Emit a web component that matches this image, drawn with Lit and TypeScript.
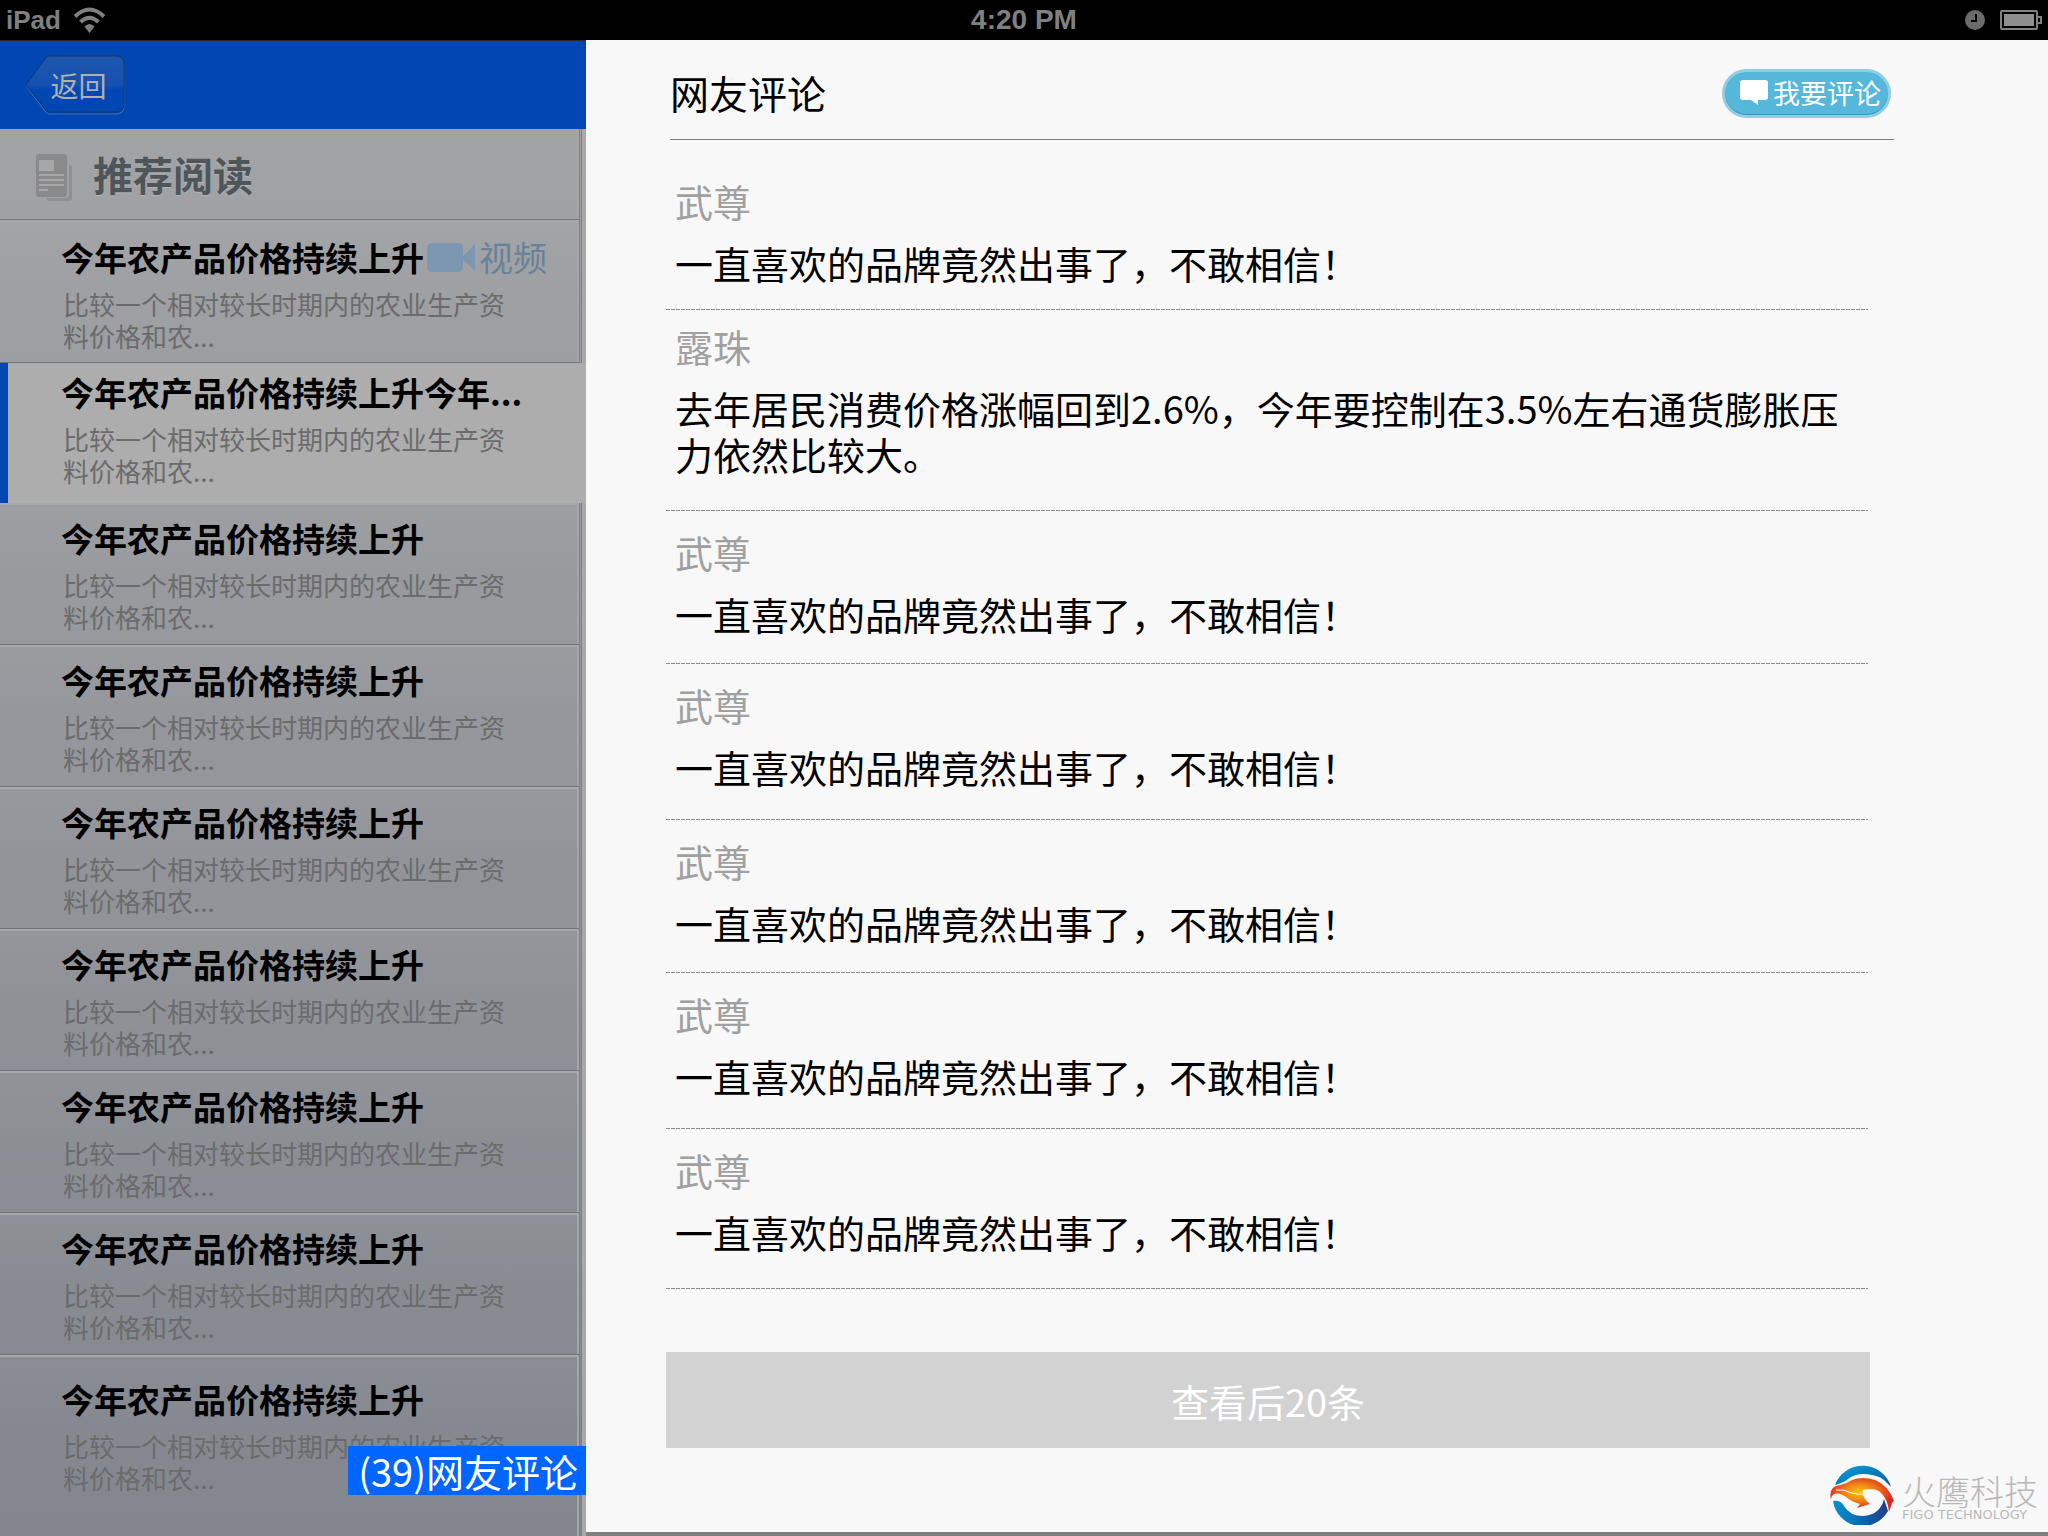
import { LitElement, html, css } from "lit";
import { customElement } from "lit/decorators.js";
import { classMap } from "lit/directives/class-map.js";

interface Article {
  title: string;
  video?: boolean;
  active?: boolean;
}

interface Comment {
  name: string;
  text: string;
  space?: "short" | "tight" | "loose" | "long";
}

const TITLE = "今年农产品价格持续上升";
const SUMMARY = ["比较一个相对较长时期内的农业生产资", "料价格和农..."];
const PRAISE = "一直喜欢的品牌竟然出事了，不敢相信！";

const articles: Article[] = [
  { title: TITLE, video: true },
  { title: TITLE + "今年...", active: true },
  ...Array.from({ length: 7 }, () => ({ title: TITLE })),
];

const comments: Comment[] = [
  { name: "武尊", text: PRAISE, space: "short" },
  { name: "露珠", text: "去年居民消费价格涨幅回到2.6%，今年要控制在3.5%左右通货膨胀压力依然比较大。", space: "long" },
  { name: "武尊", text: PRAISE, space: "tight" },
  { name: "武尊", text: PRAISE },
  { name: "武尊", text: PRAISE, space: "tight" },
  { name: "武尊", text: PRAISE },
  { name: "武尊", text: PRAISE, space: "loose" },
];

@customElement("status-bar")
class StatusBar extends LitElement {
  static styles = css`
    :host {
      display: grid;
      grid-template-columns: 1fr auto 1fr;
      align-items: center;
      height: 40px;
      padding: 0 6px;
      background: #000;
      color: #808080;
      font: bold 28px/40px "Liberation Sans", Arial, sans-serif;
    }
    .left, .right { display: flex; align-items: center; }
    .left { gap: 12px; font-size: 26px; }
    .right { justify-content: flex-end; gap: 15px; }
    svg { display: block; }
  `;
  render() {
    return html`
      <div class="left">
        <span>iPad</span>
        <svg width="33" height="28" viewBox="0 0 33 28" fill="none" stroke="#808080" stroke-width="4">
          <path d="M2 10.5Q16.500-3.500 31 10.500"/>
          <path d="M7.500 16Q16.500 7.500 25.500 16"/>
          <path d="M11.500 20.500Q16.500 15.500 21.500 20.500L16.500 27Z" fill="#808080" stroke="none"/>
        </svg>
      </div>
      <span>4:20 PM</span>
      <div class="right">
        <svg width="20" height="20" viewBox="0 0 20 20">
          <circle cx="10" cy="10" r="10" fill="#6b6b6b"/>
          <path d="M11 4V11H6" fill="none" stroke="#000" stroke-width="2"/>
        </svg>
        <svg width="42" height="20" viewBox="0 0 42 20">
          <rect x="1" y="1" width="36" height="18" rx="1" fill="none" stroke="#808080" stroke-width="2"/>
          <rect x="4" y="4" width="30" height="12" fill="#8e8e8e"/>
          <path d="M38 7h3v6h-3" fill="none" stroke="#808080" stroke-width="2"/>
        </svg>
      </div>
    `;
  }
}

@customElement("article-list")
class ArticleList extends LitElement {
  static styles = css`
    :host {
      display: flex;
      flex-direction: column;
      position: relative;
      background: #a9a9aa;
      font-family: "Noto Sans CJK SC", sans-serif;
    }
    .top {
      display: flex;
      align-items: center;
      height: 88px;
      padding: 0 24px;
      border-top: 1px solid #2a2a2a;
      background: #0047b3;
    }
    .back {
      position: relative;
      width: 101px;
      height: 60px;
      padding: 0 0 0 8px;
      border: 0;
      background: none;
      color: #b0b0b0;
      font: inherit;
      font-size: 28px;
      line-height: 58px;
    }
    .back svg { position: absolute; inset: 0; }
    .back span { position: relative; }
    .pane {
      flex: 1;
      margin-right: 4px;
      border-right: 3px double #7e7f82;
      background: linear-gradient(#a2a3a5, #9b9ca0 25%, #83868e);
      box-shadow: inset -2px 0 #a4a5a7;
    }
    h2 {
      box-sizing: border-box;
      display: flex;
      align-items: center;
      gap: 21px;
      height: 91px;
      margin: 0;
      padding: 0 0 0 36px;
      border-bottom: 1px solid #77787b;
      color: #4e565a;
      font-size: 40px;
      line-height: 60px;
      text-shadow: 0 1px 1px #b5b6b8;
    }
    h2 svg { margin-top: 8px; }
    ul { margin: 0; padding: 0; list-style: none; }
    li {
      box-sizing: border-box;
      height: 142px;
      padding: 10px 0 0 61px;
      border-top: 2px solid #a7a8aa;
      border-bottom: 1px solid #727478;
      background: linear-gradient(#ffffff08, #0000 50%);
    }
    li:first-child { height: 143px; padding-top: 12px; }
    li.active {
      height: 140px;
      margin-right: -7px;
      padding: 6px 0 0 53px;
      border: 0;
      border-left: 8px solid #0047b3;
      background: #adadad;
    }
    li:last-child { padding-top: 19px; border-bottom: 0; }
    a {
      display: flex;
      align-items: center;
      color: #000;
      font-size: 33px;
      font-weight: 700;
      line-height: 46px;
      text-decoration: none;
      white-space: nowrap;
    }
    .video {
      display: flex;
      align-items: center;
      gap: 4px;
      margin-left: 3px;
      color: #6a8299;
      font-size: 34px;
      font-weight: 400;
    }
    p {
      margin: 8px 0 0 2px;
      color: #6b6b6c;
      font-size: 26px;
      line-height: 32px;
      white-space: pre-line;
    }
    .count {
      position: absolute;
      right: 0;
      bottom: 41px;
      height: 49px;
      padding: 0 8px 0 10px;
      border: 0;
      background: #0066ff;
      color: #fff;
      font: inherit;
      font-size: 38px;
      line-height: 48px;
    }
  `;
  render() {
    return html`
      <header class="top">
        <button class="back">
          <svg width="101" height="60" viewBox="0 0 101 60">
            <defs>
              <linearGradient id="face" x1="0" y1="0" x2="0" y2="1">
                <stop offset="0" stop-color="#1d56ae"/>
                <stop offset="0.52" stop-color="#1651b0"/>
                <stop offset="0.6" stop-color="#0047b3"/>
              </linearGradient>
            </defs>
            <path d="M25 2H92Q100 2 100 10V51Q100 59 92 59H25Q23 59 21 56L2 31L21 5Q23 2 25 2Z" fill="none" stroke="#3d70bd"/>
            <path d="M25 1H92Q100 1 100 9V49Q100 57 92 57H25Q23 57 21 54L2 30L21 4Q23 1 25 1Z" fill="url(#face)" stroke="#1c3460"/>
          </svg>
          <span>返回</span>
        </button>
      </header>
      <div class="pane">
        <h2>
          <svg width="36" height="48" viewBox="0 0 36 48">
            <path d="M33 11Q36 11 36 14V44Q36 47 33 47H14Q11 47 10 44H29Q33 44 33 40Z" fill="#8f9091"/>
            <rect width="31" height="43" rx="3" fill="#8a8a8a"/>
            <path d="M3 6H18V17H3ZM3 20H28V22H3ZM3 25H28V27H3ZM3 30H28V32H3ZM3 35H12V37H3Z" fill="#a6a7a8"/>
          </svg>
          推荐阅读
        </h2>
        <ul>
          ${articles.map((a) => html`
            <li class=${classMap({ active: !!a.active })}>
              <a href="#">${a.title}${a.video ? html`
                <span class="video">
                  <svg width="48" height="29" viewBox="0 0 48 29" fill="#7d97b3">
                    <rect width="36" height="29" rx="5"/>
                    <path d="M35 14L48 1V28L35 16Z"/>
                  </svg>视频</span>` : ""}</a>
              <p>${SUMMARY.join("\n")}</p>
            </li>`)}
        </ul>
      </div>
      <button class="count">(39)网友评论</button>
    `;
  }
}

@customElement("comment-panel")
class CommentPanel extends LitElement {
  static styles = css`
    :host {
      display: flex;
      flex-direction: column;
      padding: 0 154px 0 80px;
      border-bottom: 4px solid #808080;
      background: #f8f8f8;
      font-family: "Noto Sans CJK SC", sans-serif;
    }
    header {
      display: flex;
      justify-content: space-between;
      align-items: center;
      height: 99px;
      margin-left: 4px;
      border-bottom: 1px solid #7c7c7c;
    }
    h1 { margin: 4px 0 0; font-size: 39px; font-weight: 400; line-height: 60px; color: #000; }
    .write {
      display: flex;
      align-items: center;
      gap: 5px;
      box-sizing: border-box;
      height: 49px;
      margin: 7px 3px 0 0;
      padding: 0 7px 0 15px;
      border: 3px solid #92cde1;
      border-radius: 25px;
      background: #55b7da;
      box-shadow: inset 0 -1px 0 #3f97b6;
      color: #fff;
      font: inherit;
      font-size: 27px;
      line-height: 40px;
    }
    ul { margin: 0 26px 0 0; padding: 20px 0 0; list-style: none; }
    li {
      padding: 13px 0 30px 9px;
      background: repeating-linear-gradient(90deg, #8c8c8c 0 4px, #f8f8f8 4px 5px) bottom / 100% 1px no-repeat;
    }
    li.short { padding-bottom: 24px; }
    li.tight { padding-bottom: 27px; }
    li.loose { padding-bottom: 34px; }
    li.long { padding-top: 8px; padding-bottom: 34px; }
    h3 { margin: 0; color: #a0a0a0; font-size: 38px; font-weight: 400; line-height: 56px; }
    p { margin: 11px 0 0; max-width: 1170px; color: #000; font-size: 38px; line-height: 46px; }
    .more {
      height: 96px;
      margin: 63px 24px 0 0;
      border: 0;
      background: #d2d2d2;
      color: #fff;
      font: inherit;
      font-size: 38px;
    }
    footer { display: flex; justify-content: flex-end; align-items: center; gap: 6px; margin: 17px -144px 0 0; color: #b8b8b8; }
    .brand { display: flex; flex-direction: column; padding-top: 6px; }
    .brand b { font-size: 34px; font-weight: 300; line-height: 34px; }
    .brand small { font: 13px/14px "DejaVu Sans", sans-serif; }
  `;
  render() {
    return html`
      <header>
        <h1>网友评论</h1>
        <button class="write">
          <svg width="28" height="26" viewBox="0 0 28 26" fill="#fff">
            <path d="M3 0H25Q28 0 28 3V17Q28 20 25 20H18V25L11 20H3Q0 20 0 17V3Q0 0 3 0Z"/>
          </svg>
          我要评论
        </button>
      </header>
      <ul>
        ${comments.map((c) => html`
          <li class=${c.space ?? ""}>
            <h3>${c.name}</h3>
            <p>${c.text}</p>
          </li>`)}
      </ul>
      <button class="more">查看后20条</button>
      <footer>
        <svg width="66" height="60" viewBox="0 0 66 60">
          <defs>
            <linearGradient id="sky" x1="0" y1="0" x2="1" y2="1">
              <stop offset="0" stop-color="#00a3df"/><stop offset="1" stop-color="#0a559c"/>
            </linearGradient>
            <linearGradient id="sea" x1="0" y1="0" x2="1" y2="0">
              <stop offset="0" stop-color="#0092d2"/><stop offset="1" stop-color="#1f3f8a"/>
            </linearGradient>
            <radialGradient id="fire" cx="0.46" cy="0.42" r="0.52">
              <stop offset="0" stop-color="#fbc800"/><stop offset="0.45" stop-color="#f08519"/><stop offset="1" stop-color="#dd261c"/>
            </radialGradient>
          </defs>
          <path d="M5 20A29.500 29.500 0 0 1 61 22L57 18Q51 11 42 10Q27 7 18 14Q13 18 5 20Z" fill="url(#sky)"/>
          <path d="M3 36Q11 35 14 41Q20 51 33 51Q50 50 54 34L58 46A29.500 29.500 0 0 1 3 36Z" fill="url(#sea)"/>
          <path d="M1 35Q-2 21 10 20Q16 19 22 15Q32 11 45 15Q58 20 64 36L62 38L59 47Q58 34 50 27Q44 22 33 25Q31 32 40 39L27 43L30 39Q22 37 16 32Q9 27 4 29Q1 31 1 35Z" fill="url(#fire)"/>
          <path d="M6 25Q14 24 22 28Q28 30 34 29" fill="none" stroke="#fff" stroke-width="1"/>
        </svg>
        <div class="brand"><b>火鹰科技</b><small>FIGO TECHNOLOGY</small></div>
      </footer>
    `;
  }
}

@customElement("app-root")
class AppRoot extends LitElement {
  static styles = css`
    :host {
      display: grid;
      grid-template: auto 1fr / 586px 1fr;
      min-height: 100vh;
    }
    status-bar { grid-column: 1 / -1; }
  `;
  render() {
    return html`
      <status-bar></status-bar>
      <article-list></article-list>
      <comment-panel></comment-panel>
    `;
  }
}
